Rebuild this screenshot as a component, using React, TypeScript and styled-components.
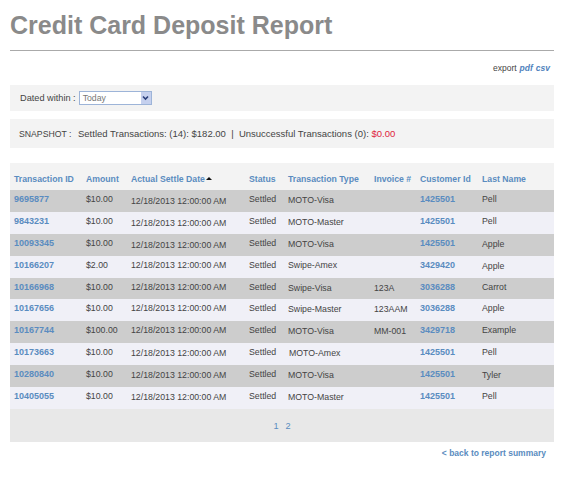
import React from "react";
import styled, { createGlobalStyle } from "styled-components";

const Global = createGlobalStyle`
  html, body { margin: 0; padding: 0; background: #fff; }
  body { font-family: "Liberation Sans", Arial, sans-serif; color: #444; }
`;

const Page = styled.div`
  width: 544px;
  height: 488px;
  margin-left: 10px;
  overflow: hidden;
`;
const Title = styled.h1`
  margin: 0;
  height: 41px;
  padding-top: 9px;
  box-sizing: content-box;
  font-size: 25px;
  line-height: 32px;
  font-weight: bold;
  color: #8a8a8a;
  border-bottom: 1px solid #aaa;
`;
const ExportRow = styled.div`
  display: flex;
  justify-content: flex-end;
  gap: 3px;
  height: 34px;
  padding: 12px 4px 0 0;
  box-sizing: border-box;
  font-size: 8.5px;
  line-height: 11px;
  color: #444;
`;
const ExportLink = styled.a`
  color: #4f82bd;
  font-style: italic;
  font-weight: bold;
  font-size: 8.5px;
`;
const FilterBar = styled.div`
  display: flex;
  align-items: center;
  gap: 3px;
  height: 26px;
  padding-left: 10px;
  background: #f3f3f3;
  font-size: 9.2px;
  color: #444;
`;
const SelectBox = styled.div`
  display: flex;
  align-items: center;
  justify-content: space-between;
  width: 68px;
  height: 12px;
  box-sizing: content-box;
  border: 1px solid #9db4d8;
  background: #fff;
  color: #777;
  font-size: 8.7px;
  padding-left: 3px;
`;
const SelectArrow = styled.span`
  display: flex;
  align-items: center;
  justify-content: center;
  width: 10px;
  height: 12px;
  background: #c5d0ee;
`;
const SnapshotBar = styled.div`
  display: flex;
  align-items: center;
  height: 29px;
  margin-top: 8px;
  padding-left: 9px;
  background: #f3f3f3;
  font-size: 9.5px;
  color: #444;
  white-space: pre;
`;
const SnapshotLabel = styled.span`
  width: 59px;
  font-size: 8.7px;
`;
const Red = styled.span`
  color: #e0243c;
`;
const Table = styled.div`
  margin-top: 15px;
`;
const Cols = `72px 45px 118px 39px 86px 46px 62px 1fr`;
const Head = styled.div`
  display: grid;
  grid-template-columns: ${Cols};
  height: 27px;
  padding: 11px 0 0 4px;
  box-sizing: border-box;
  background: #f3f3f3;
  font-size: 8.7px;
  line-height: 11px;
  font-weight: bold;
  color: #5a8cc0;
  white-space: nowrap;
`;
const HeadCell = styled.span`
  display: block;
`;
const SortArrow = styled.span`
  display: inline-block;
  width: 0;
  height: 0;
  margin-left: 1px;
  vertical-align: 2px;
  border-left: 3px solid transparent;
  border-right: 3px solid transparent;
  border-bottom: 3px solid #111;
`;
const Row = styled.div<{ $dark: boolean }>`
  display: grid;
  grid-template-columns: ${Cols};
  height: 21.9px;
  padding-left: 4px;
  box-sizing: border-box;
  background: ${(p) => (p.$dark ? "#cdcdcd" : "#f0f0f7")};
  font-size: 8.75px;
  line-height: 11px;
  color: #444;
  white-space: nowrap;
`;
const Cell = styled.span<{ $drop?: number; $inset?: number }>`
  padding-top: ${(p) => 4 + (p.$drop ?? 0)}px;
  padding-left: ${(p) => p.$inset ?? 0}px;
`;
const IdLink = styled.a`
  color: #5a8cc0;
  font-weight: bold;
  font-size: 9px;
`;
const Pager = styled.div`
  display: flex;
  justify-content: center;
  gap: 7px;
  height: 33px;
  padding-top: 12px;
  box-sizing: border-box;
  background: #e8e8e8;
  font-size: 9.2px;
  line-height: 11px;
  color: #5a8cc0;
`;
const BackRow = styled.div`
  display: flex;
  justify-content: flex-end;
  padding: 6px 8px 0 0;
  font-size: 8.5px;
  line-height: 11px;
  font-weight: bold;
  color: #5a8cc0;
`;

const rows = [
  ["9695877", "$10.00", 2, "MOTO-Visa", 1, 0, "", "1425501", "Pell", 0],
  ["9843231", "$10.00", 2, "MOTO-Master", 1, 0, "", "1425501", "Pell", 0],
  ["10093345", "$10.00", 2, "MOTO-Visa", 1, 0, "", "1425501", "Apple", 1],
  ["10166207", "$2.00", 0, "Swipe-Amex", 0, 0, "", "3429420", "Apple", 1],
  ["10166968", "$10.00", 0, "Swipe-Visa", 1, 0, "123A", "3036288", "Carrot", 0],
  ["10167656", "$10.00", 0, "Swipe-Master", 1, 0, "123AAM", "3036288", "Apple", 0],
  ["10167744", "$100.00", 0, "MOTO-Visa", 1, 0, "MM-001", "3429718", "Example", 0],
  ["10173663", "$10.00", 1, "MOTO-Amex", 1, 1, "", "1425501", "Pell", 0],
  ["10280840", "$10.00", 1, "MOTO-Visa", 1, 0, "", "1425501", "Tyler", 1],
  ["10405055", "$10.00", 1, "MOTO-Master", 1, 0, "", "1425501", "Pell", 0],
] as const;

export default function App() {
  return (
    <Page>
      <Global />
      <Title>Credit Card Deposit Report</Title>
      <ExportRow>
        <span>export</span>
        <ExportLink>pdf</ExportLink>
        <ExportLink>csv</ExportLink>
      </ExportRow>
      <FilterBar>
        <span>Dated within :</span>
        <SelectBox>
          <span>Today</span>
          <SelectArrow>
            <svg width="7" height="6" viewBox="0 0 7 6">
              <path d="M1 1.5 L3.5 4 L6 1.5" fill="none" stroke="#2a3f7a" strokeWidth="1.6" />
            </svg>
          </SelectArrow>
        </SelectBox>
      </FilterBar>
      <SnapshotBar>
        <SnapshotLabel>SNAPSHOT :</SnapshotLabel>
        <span>Settled Transactions: (14): $182.00  |  Unsuccessful Transactions (0): </span>
        <Red>$0.00</Red>
      </SnapshotBar>
      <Table>
        <Head>
          <HeadCell>Transaction ID</HeadCell>
          <HeadCell>Amount</HeadCell>
          <HeadCell>
            Actual Settle Date
            <SortArrow />
          </HeadCell>
          <HeadCell>Status</HeadCell>
          <HeadCell>Transaction Type</HeadCell>
          <HeadCell>Invoice #</HeadCell>
          <HeadCell>Customer Id</HeadCell>
          <HeadCell>Last Name</HeadCell>
        </Head>
        {rows.map((r, i) => (
          <Row key={r[0]} $dark={i % 2 === 0}>
            <Cell>
              <IdLink>{r[0]}</IdLink>
            </Cell>
            <Cell>{r[1]}</Cell>
            <Cell $drop={r[2]}>12/18/2013 12:00:00 AM</Cell>
            <Cell>Settled</Cell>
            <Cell $drop={r[4]} $inset={r[5]}>
              {r[3]}
            </Cell>
            <Cell $drop={1}>{r[6]}</Cell>
            <Cell>
              <IdLink>{r[7]}</IdLink>
            </Cell>
            <Cell $drop={r[9]}>{r[8]}</Cell>
          </Row>
        ))}
        <Pager>
          <span>1</span>
          <span>2</span>
        </Pager>
      </Table>
      <BackRow>&lt; back to report summary</BackRow>
    </Page>
  );
}
